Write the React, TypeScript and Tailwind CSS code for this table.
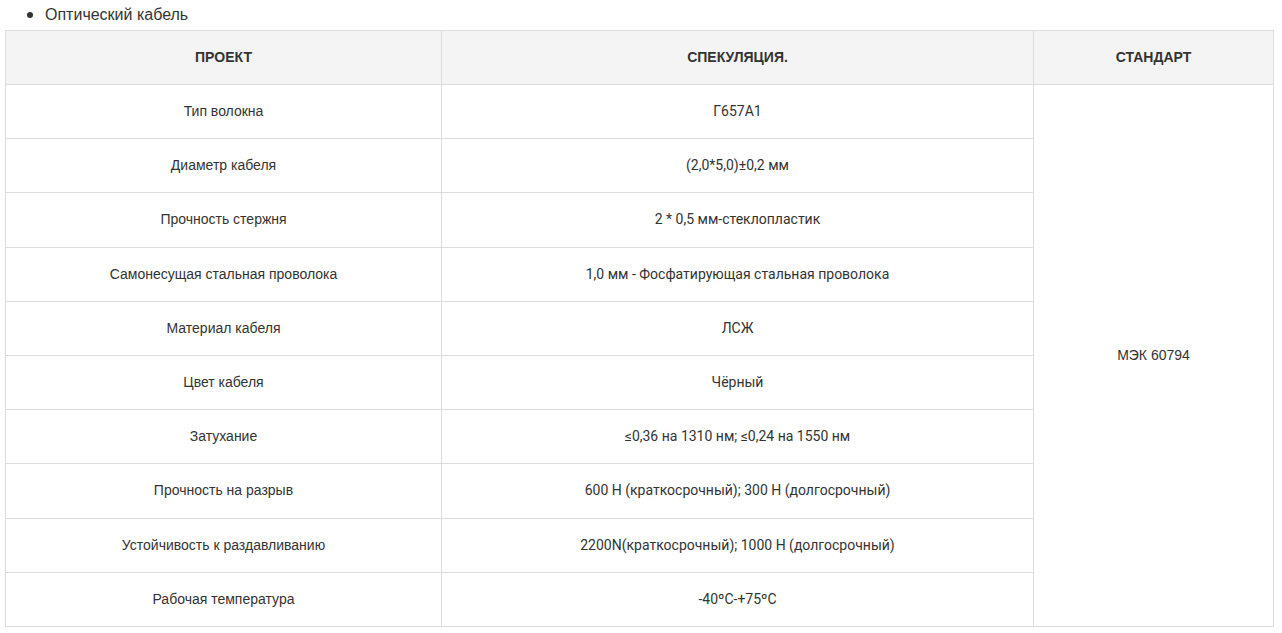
import React from 'react';

const rows: [string, string][] = [
  ['Тип волокна', 'Г657A1'],
  ['Диаметр кабеля', '(2,0*5,0)±0,2 мм'],
  ['Прочность стержня', '2 * 0,5 мм-стеклопластик'],
  ['Самонесущая стальная проволока', '1,0 мм - Фосфатирующая стальная проволока'],
  ['Материал кабеля', 'ЛСЖ'],
  ['Цвет кабеля', 'Чёрный'],
  ['Затухание', '≤0,36 на 1310 нм; ≤0,24 на 1550 нм'],
  ['Прочность на разрыв', '600 Н (краткосрочный); 300 Н (долгосрочный)'],
  ['Устойчивость к раздавливанию', '2200N(краткосрочный); 1000 Н (долгосрочный)'],
  ['Рабочая температура', '-40ºC-+75ºC'],
];

export default function App() {
  return (
    <div className="bg-white min-h-screen text-[#333] font-['Liberation_Sans',Arial,sans-serif]">
      <div className="flex items-center h-[30px] pl-[27px]">
        <span className="w-[6px] h-[6px] rounded-full bg-[#333] mr-[12px]" />
        <span className="text-[16px]">Оптический кабель</span>
      </div>
      <div className="pl-[5px]">
        <table className="border-collapse table-fixed w-[1268px] text-center">
          <colgroup>
            <col className="w-[436px]" />
            <col className="w-[592px]" />
            <col className="w-[240px]" />
          </colgroup>
          <thead>
            <tr className="bg-[#f4f4f4] h-[54px]">
              <th className="border border-[#dddddd] text-[14px] font-bold">ПРОЕКТ</th>
              <th className="border border-[#dddddd] text-[14px] font-bold">СПЕКУЛЯЦИЯ.</th>
              <th className="border border-[#dddddd] text-[14px] font-bold">СТАНДАРТ</th>
            </tr>
          </thead>
          <tbody>
            {rows.map(([name, spec], i) => (
              <tr key={i} className="h-[54.2px]">
                <td className="border border-[#dddddd] text-[14px]">{name}</td>
                <td className="border border-[#dddddd] text-[14px] font-['Roboto',sans-serif]">{spec}</td>
                {i === 0 && (
                  <td rowSpan={rows.length} className="border border-[#dddddd] text-[14px]">
                    МЭК 60794
                  </td>
                )}
              </tr>
            ))}
          </tbody>
        </table>
      </div>
    </div>
  );
}
